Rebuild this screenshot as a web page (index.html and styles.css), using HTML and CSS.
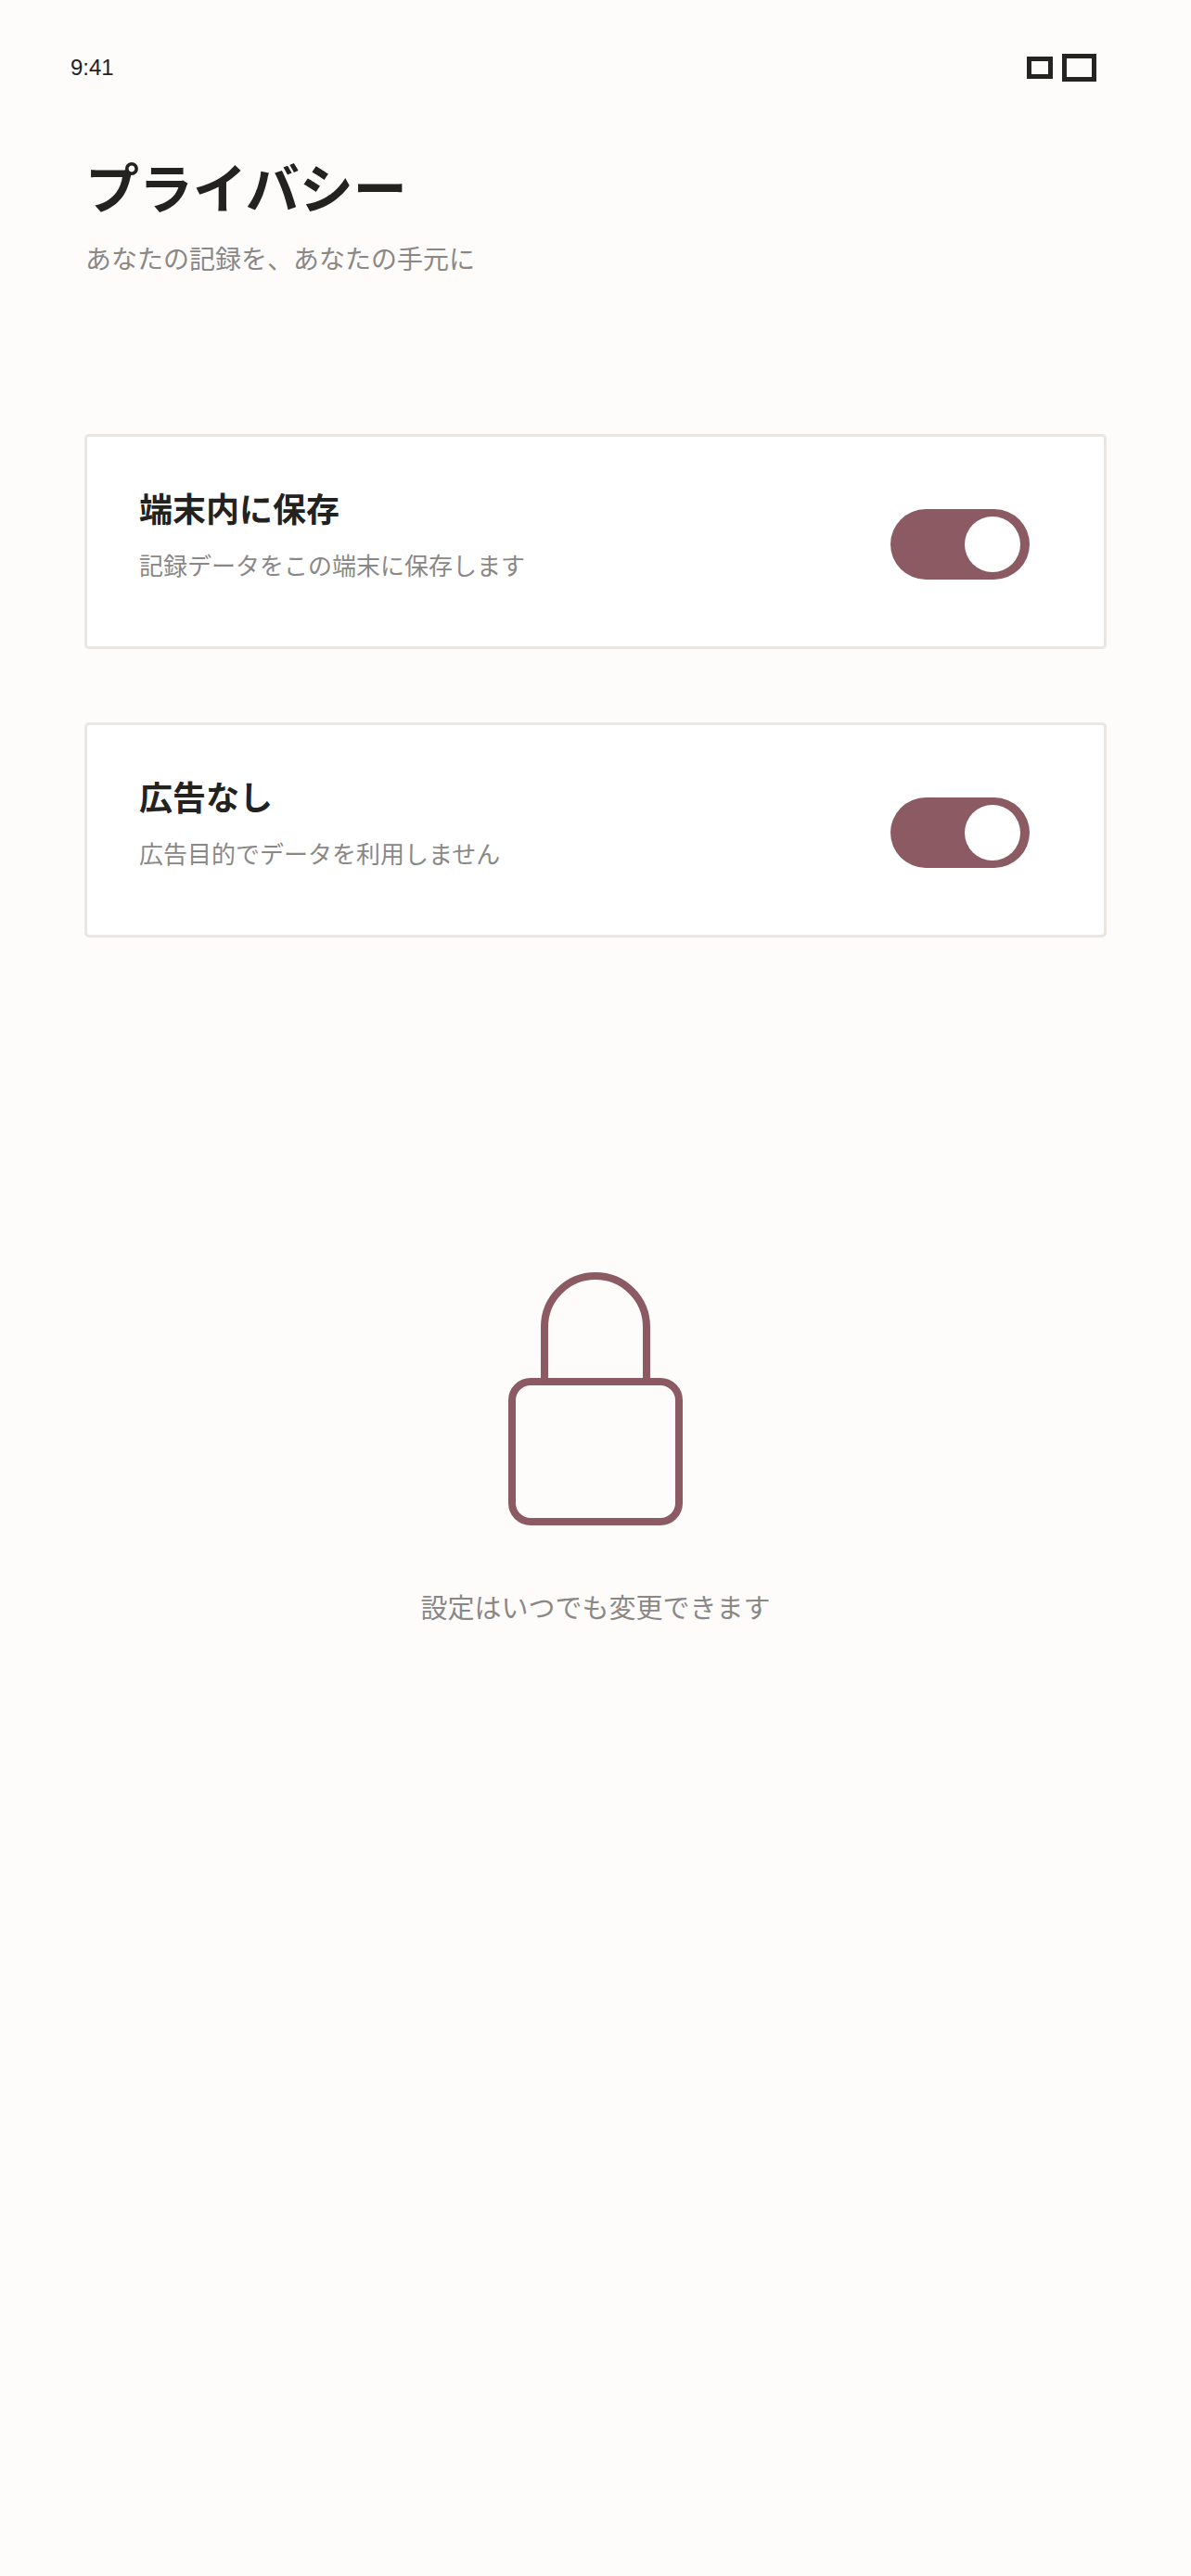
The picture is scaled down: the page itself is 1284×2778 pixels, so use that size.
FILE: index.html
```html
<!DOCTYPE html>
<html lang="ja">
<head>
    <meta charset="UTF-8">
    <meta name="viewport" content="width=device-width, initial-scale=1.0">
    <title>プライバシー</title>
    <link rel="stylesheet" href="styles.css">
</head>
<body>
    <div class="status-bar">
        <span class="time">9:41</span>
        <div class="status-icons">
            <div class="status-box small"></div>
            <div class="status-box large"></div>
        </div>
    </div>

    <div class="header">
        <h1>プライバシー</h1>
        <p>あなたの記録を、あなたの手元に</p>
    </div>

    <div class="cards">
        <div class="card">
            <div class="card-text">
                <h2>端末内に保存</h2>
                <p>記録データをこの端末に保存します</p>
            </div>
            <div class="toggle"><div class="knob"></div></div>
        </div>
        <div class="card">
            <div class="card-text">
                <h2>広告なし</h2>
                <p>広告目的でデータを利用しません</p>
            </div>
            <div class="toggle"><div class="knob"></div></div>
        </div>
    </div>

    <div class="lock-note">
        <svg class="lock-icon" width="188" height="273" viewBox="0 0 188 273" fill="none" stroke="#8b5a63" stroke-width="8">
            <path d="M39 118V59a55 55 0 0 1 110 0V118"/>
            <rect x="4" y="118" width="180" height="151" rx="20"/>
        </svg>
        <p>設定はいつでも変更できます</p>
    </div>
</body>
</html>
```

FILE: styles.css
```css
body {
    font-family: "Liberation Sans", "Noto Sans CJK JP", sans-serif;
    background: #fdfcfb;
    color: #24221f;
    margin: 0;
    min-height: 2778px;
}

.status-bar {
    display: flex;
    justify-content: space-between;
    align-items: center;
    height: 30px;
    padding: 58px 102px 0 76px;
}

.time {
    font-size: 24px;
}

.status-icons {
    display: flex;
    align-items: center;
    gap: 10px;
}

.status-box {
    box-sizing: border-box;
    border: 5px solid #262421;
}

.status-box.small {
    width: 28px;
    height: 24px;
}

.status-box.large {
    width: 37px;
    height: 30px;
}

.header {
    padding: 77px 92px 0;
}

.header h1 {
    margin: 0;
    font-size: 58px;
    line-height: 80px;
    font-weight: 700;
}

.header p {
    margin: 16px 0 0;
    font-size: 28px;
    line-height: 40px;
    color: #8a8886;
}

.cards {
    display: flex;
    flex-direction: column;
    gap: 79px;
    padding: 167px 91px 0 91px;
}

.card {
    box-sizing: border-box;
    height: 232px;
    background: #fff;
    border: 3px solid #e9e6e3;
    border-radius: 5px;
    display: flex;
    align-items: center;
    justify-content: space-between;
    padding: 0 80px 0 56px;
}

.card-text {
    padding-bottom: 13px;
}

.card-text h2 {
    margin: 0;
    font-size: 36px;
    line-height: 50px;
    font-weight: 700;
}

.card-text p {
    margin: 16px 0 0;
    font-size: 26px;
    line-height: 38px;
    color: #8a8886;
}

.toggle {
    box-sizing: border-box;
    width: 150px;
    height: 76px;
    margin-top: 6px;
    padding: 8px 10px;
    border-radius: 38px;
    background: #8b5a63;
    display: flex;
    justify-content: flex-end;
}

.knob {
    width: 60px;
    height: 60px;
    border-radius: 50%;
    background: #fff;
}

.lock-note {
    display: flex;
    flex-direction: column;
    align-items: center;
    padding-top: 361px;
}

.lock-icon {
    display: block;
}

.lock-note p {
    margin: 70px 0 0;
    font-size: 29px;
    line-height: 40px;
    color: #8a8886;
}
```
